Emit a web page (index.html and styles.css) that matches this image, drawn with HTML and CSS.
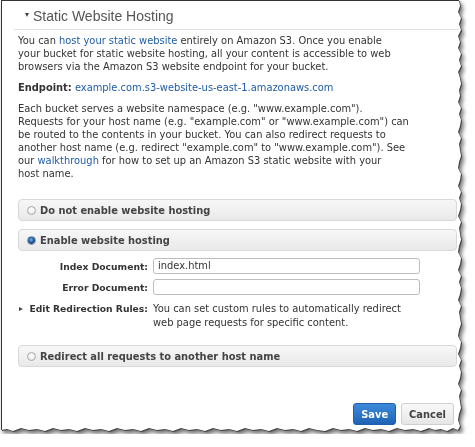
FILE: index.html
```html
<!DOCTYPE html>
<html>
<head>
<meta charset="utf-8">
<link rel="stylesheet" href="styles.css">
</head>
<body>
<div class="shadow">
  <div class="sheet">
    <div class="header"><span class="caret-down"></span><span class="title">Static Website Hosting</span></div>
    <div class="content">
      <p>You can <a href="#">host your static website</a> entirely on Amazon S3. Once you enable your&nbsp;bucket for static website hosting, all your content is accessible to web browsers via the Amazon S3 website endpoint for your bucket.</p>
      <p><b>Endpoint:</b> <a href="#">example.com.s3-website-us-east-1.amazonaws.com</a></p>
      <p>Each bucket serves a website namespace (e.g. "www.example.com"). Requests for your host name (e.g. "example.com" or "www.example.com") can be routed to the contents in your bucket. You can also redirect requests to another host name (e.g. redirect "example.com" to "www.example.com"). See our <a href="#">walkthrough</a> for how to set up an Amazon S3 static website with your host&nbsp;name.</p>

      <div class="option first"><span class="radio"></span>Do not enable website hosting</div>
      <div class="option"><span class="radio on"></span>Enable website hosting</div>

      <div class="form">
        <label class="lbl">Index Document:</label>
        <div class="field">index.html</div>
        <label class="lbl">Error Document:</label>
        <div class="field"></div>
        <label class="lbl lbl-top"><span class="caret-right"></span>Edit Redirection Rules:</label>
        <div class="desc">You can set custom rules to automatically redirect web page requests for specific content.</div>
      </div>

      <div class="option redirect"><span class="radio"></span>Redirect all requests to another host name</div>

      <div class="actions">
        <button class="btn primary">Save</button>
        <button class="btn">Cancel</button>
      </div>
    </div>
  </div>
</div>
</body>
</html>
```

FILE: styles.css
```css
html, body {
  margin: 0;
  padding: 0;
  background: #fff;
}

.shadow {
  width: 462px;
  height: 434px;
  filter: drop-shadow(1px 1px 0 #444) drop-shadow(2px 3px 2px rgba(0,0,0,0.55));
}

.sheet {
  box-sizing: border-box;
  margin-left: 1px;
  width: 461px;
  height: 433px;
  background: #fff;
  border-top: 1px solid #333;
  border-left: 1px solid #333;
  clip-path: polygon(0 0, 458px 0, 459px 6px, 457px 12px, 460px 18px, 458px 24px, 460px 30px, 457px 36px, 459px 42px, 457px 48px, 460px 54px, 458px 60px, 460px 66px, 457px 72px, 459px 78px, 460px 84px, 458px 90px, 459px 96px, 457px 102px, 460px 108px, 458px 114px, 460px 120px, 459px 126px, 457px 132px, 460px 138px, 458px 144px, 459px 150px, 460px 156px, 458px 162px, 457px 168px, 460px 174px, 459px 180px, 457px 186px, 460px 192px, 458px 198px, 460px 204px, 459px 210px, 457px 216px, 460px 222px, 458px 228px, 459px 234px, 460px 240px, 458px 246px, 457px 252px, 460px 258px, 459px 264px, 457px 270px, 460px 276px, 458px 282px, 460px 288px, 459px 294px, 457px 300px, 460px 306px, 458px 312px, 459px 318px, 460px 324px, 458px 330px, 457px 336px, 460px 342px, 459px 348px, 457px 354px, 460px 360px, 458px 366px, 460px 372px, 459px 378px, 457px 384px, 460px 390px, 458px 396px, 459px 402px, 460px 408px, 458px 414px, 457px 420px, 459px 426px, 457px 430px, 452px 428px, 446px 431px, 440px 429px, 434px 430px, 428px 428px, 420px 431px, 412px 429px, 404px 430px, 396px 428px, 388px 431px, 380px 429px, 372px 430px, 364px 428px, 356px 431px, 348px 429px, 340px 430px, 332px 428px, 324px 431px, 316px 430px, 308px 428px, 300px 431px, 292px 429px, 284px 430px, 276px 428px, 268px 431px, 260px 429px, 252px 430px, 244px 428px, 236px 431px, 228px 429px, 220px 430px, 212px 428px, 204px 431px, 196px 429px, 188px 430px, 180px 428px, 172px 431px, 164px 429px, 156px 430px, 148px 428px, 140px 431px, 132px 429px, 124px 430px, 116px 428px, 108px 431px, 100px 429px, 92px 430px, 84px 428px, 76px 431px, 68px 429px, 60px 430px, 52px 428px, 44px 431px, 36px 429px, 28px 430px, 20px 428px, 12px 431px, 6px 429px, 0 430px);
  font-family: "DejaVu Sans", Verdana, sans-serif;
  font-size: 9.9px;
  color: #333;
}

.header {
  margin-left: 12px;
  padding: 6px 0 4px 11px;
  height: 18px;
  border-bottom: 1px solid #e2e2e2;
  display: flex;
  align-items: center;
  font-family: "Liberation Sans", Arial, sans-serif;
  font-size: 14px;
  line-height: 18px;
  color: #555;
}

.caret-down {
  width: 0;
  height: 0;
  border-left: 2.5px solid transparent;
  border-right: 2.5px solid transparent;
  border-top: 4px solid #444;
  margin-right: 4px;
  margin-top: -2px;
}

.content {
  padding: 4px 5px 0 16px;
}

p {
  margin: 0 0 8px;
  line-height: 13px;
  max-width: 392px;
}

a {
  color: #1d5ca6;
  text-decoration: none;
}

b {
  font-weight: bold;
  color: #333;
}

.option {
  box-sizing: border-box;
  height: 22px;
  border: 1px solid #d8d8d8;
  border-radius: 4px;
  background: linear-gradient(#f7f7f7, #e9e9e9);
  display: flex;
  align-items: center;
  padding-left: 8px;
  font-weight: bold;
  color: #444;
  margin-top: 8px;
}

.option.first {
  margin-top: 19px;
}

.option.redirect {
  margin-top: 15px;
}

.radio {
  box-sizing: border-box;
  width: 9px;
  height: 9px;
  border-radius: 50%;
  border: 1px solid #a8a8a8;
  background: radial-gradient(circle at 50% 40%, #fff, #e2e2e2);
  margin-right: 4px;
}

.radio.on {
  border-color: #7d8fa3;
  background: radial-gradient(circle at 45% 40%, #7fb4e8 0, #1f5fa8 45%, #203a66 70%, #e8e8e8 72%);
}

.form {
  display: grid;
  grid-template-columns: 130px 267px;
  column-gap: 5px;
  row-gap: 5px;
  margin-top: 7px;
  align-items: center;
}

.lbl {
  text-align: right;
  font-weight: bold;
  font-size: 9.2px;
  white-space: nowrap;
  color: #333;
  line-height: 13px;
}

.lbl-top {
  align-self: start;
  margin-top: 2px;
  display: flex;
  align-items: center;
  justify-content: flex-end;
}

.caret-right {
  width: 0;
  height: 0;
  border-top: 2.5px solid transparent;
  border-bottom: 2.5px solid transparent;
  border-left: 4px solid #444;
  margin-right: 6px;
}

.field {
  box-sizing: border-box;
  height: 16px;
  border: 1px solid #bdbdbd;
  border-radius: 3px;
  background: #fff;
  padding-left: 4px;
  line-height: 14px;
  color: #333;
}

.desc {
  margin-top: 2px;
  line-height: 14px;
  color: #333;
}

.actions {
  display: flex;
  justify-content: flex-end;
  gap: 5px;
  margin-top: 36px;
  padding-right: 3px;
}

.btn {
  box-sizing: border-box;
  height: 22px;
  padding: 0 7px;
  border: 1px solid #cfcfcf;
  border-radius: 3px;
  background: linear-gradient(#f9f9f9, #e6e6e6);
  font-family: "DejaVu Sans", Verdana, sans-serif;
  font-size: 9.9px;
  font-weight: bold;
  color: #444;
}

.btn.primary {
  border-color: #1d5fae;
  background: linear-gradient(#3d8ad9, #1f63b6);
  color: #fff;
}
```
